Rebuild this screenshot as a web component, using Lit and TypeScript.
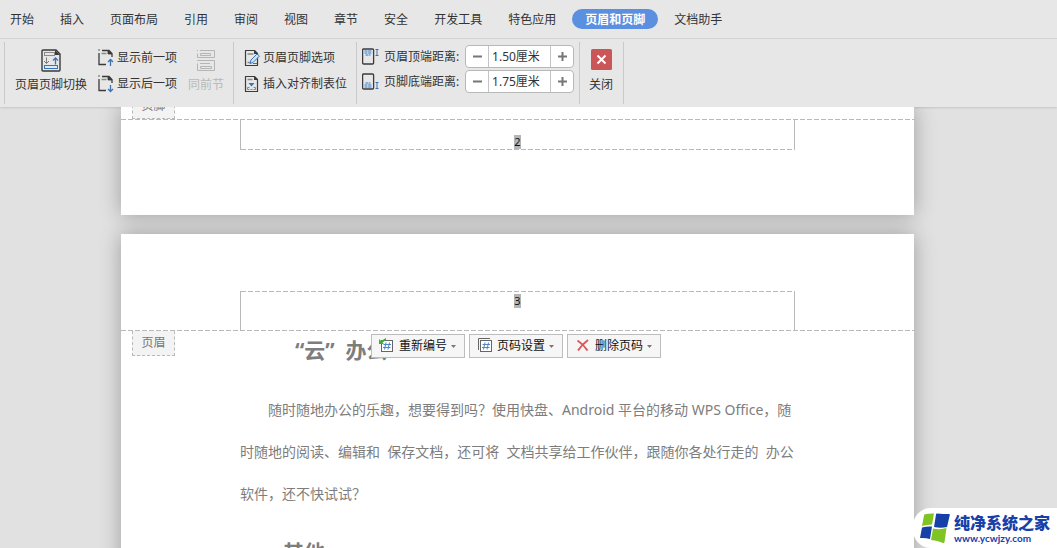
import { LitElement, html, css, svg } from "lit";
import { customElement, property, state } from "lit/decorators.js";

const DARK = "#3b3b3b";
const BLUE = "#3a74b8";

/* Sheet outline with a folded top-right corner, shared by the ribbon icons. */
const sheet = svg`
  <path d="M1.5 1.5h9l3 3v12h-12z" fill="none" stroke=${DARK} stroke-width="1.2" stroke-linejoin="round"/>
  <path d="M10 1l4 4h-4z" fill=${DARK}/>`;

const icons = {
  swap: html`<svg width="20" height="23" viewBox="0 0 20 23" aria-hidden="true">
    <path d="M1 2q0-1 1-1h13l4 4v16q0 1-1 1h-16q-1 0-1-1z" fill="none" stroke=${DARK} stroke-width="1.4"/>
    <path d="M14 1l5 5h-5z" fill=${DARK}/>
    <rect x="3.500" y="3.500" width="10" height="3" fill="none" stroke="#8a8a8a"/>
    <path d="M5.500 8.500v6M3 12l2.500 2.500L8 12" fill="none" stroke="#7d7d7d"/>
    <path d="M14.500 15.500V9M12 11.500L14.500 9l2.500 2.500" fill="none" stroke=${BLUE} stroke-width="1.3"/>
    <rect x="3.500" y="16.500" width="13" height="3" fill="#dcebfa" stroke=${BLUE}/>
  </svg>`,
  prev: html`<svg width="16" height="18" viewBox="0 0 16 18" aria-hidden="true">
    <path d="M1 4v11.500h7M4 1.500h7l3 3V8" fill="none" stroke=${DARK} stroke-width="1.3"/>
    <path d="M0 1h2M10 1l4 4H10z" fill=${DARK} stroke=${DARK} stroke-width=".8"/>
    <path d="M3.500 4.500h5" stroke="#8a8a8a" stroke-width="1.500"/>
    <path d="M12.500 17v-6.500M10 13l2.500-2.500L15 13" fill="none" stroke=${BLUE} stroke-width="1.3"/>
  </svg>`,
  next: html`<svg width="16" height="18" viewBox="0 0 16 18" aria-hidden="true">
    <path d="M1 4v11.500h7M4 1.500h7l3 3V8" fill="none" stroke=${DARK} stroke-width="1.3"/>
    <path d="M0 1h2M10 1l4 4H10z" fill=${DARK} stroke=${DARK} stroke-width=".8"/>
    <path d="M3.500 4.500h5" stroke="#8a8a8a" stroke-width="1.500"/>
    <path d="M12.500 10v6.500M10 14l2.500 2.500L15 14" fill="none" stroke=${BLUE} stroke-width="1.3"/>
  </svg>`,
  same: html`<svg width="20" height="23" viewBox="0 0 20 23" aria-hidden="true" fill="none" stroke="#b5b5b5">
    <path d="M1.500 1v1M1.500 4.500v4h17V1.500H4M4.500 4.500h10v2h-10z"/>
    <path d="M1.500 12v-.5h17v10h-17v-7M4.500 17.500h11v2h-11zM4 14.500h10"/>
  </svg>`,
  options: html`<svg width="16" height="18" viewBox="0 0 16 18" aria-hidden="true">
    ${sheet}
    <path d="M3.500 5h6M3.500 13.500h3" stroke="#8a8a8a" stroke-width="1.500"/>
    <path d="M6 14.500l1-3.500 6-6 2.500 2-6.500 6.500z" fill="#cfe3f8" stroke=${BLUE}/>
    <path d="M9 14.500h4" stroke=${BLUE}/>
  </svg>`,
  align: html`<svg width="16" height="18" viewBox="0 0 16 18" aria-hidden="true">
    ${sheet}
    <path d="M3.500 4.500h5" stroke="#8a8a8a" stroke-width="1.500"/>
    <path d="M4.500 8h6l-3 3.500z" fill=${BLUE}/>
    <path d="M3.500 14.500v-2h2M11.500 14.500v-2h-2M3.500 14.500h2m1 0h2m1 0h2" fill="none" stroke="#6b8db5"/>
  </svg>`,
  top: html`<svg width="18" height="17" viewBox="0 0 18 17" aria-hidden="true">
    <rect x=".6" y="1" width="11" height="15" rx="1" fill="none" stroke=${DARK} stroke-width="1.3"/>
    <rect x="2.500" y="2.500" width="7" height="4" fill="#dcebfa"/>
    <path d="M2.500 3h7.500M2.500 5h7.500M3.500 7h5" stroke=${BLUE} stroke-dasharray="3 .6"/>
    <path d="M13.500 1.500h3M15 1.500v6M13.500 7.500h3" stroke=${BLUE}/>
  </svg>`,
  bottom: html`<svg width="18" height="17" viewBox="0 0 18 17" aria-hidden="true">
    <rect x=".6" y="1" width="11" height="15" rx="1" fill="none" stroke=${DARK} stroke-width="1.3"/>
    <rect x="2.500" y="10" width="7" height="4" fill="#dcebfa"/>
    <path d="M3.500 10h5M2.500 12h7.500M2.500 14h7.500" stroke=${BLUE} stroke-dasharray="3 .6"/>
    <path d="M13.500 9.500h3M15 9.500v6M13.500 15.500h3" stroke=${BLUE}/>
  </svg>`,
  close: html`<svg width="21" height="21" viewBox="0 0 21 21" aria-hidden="true">
    <rect width="21" height="21" rx="1.500" fill="#cb5658"/>
    <path d="M6.500 6.500l8 8m0-8l-8 8" stroke="#fff" stroke-width="2"/>
  </svg>`,
  renumber: html`<svg width="16" height="16" viewBox="0 0 16 16" aria-hidden="true">
    <rect x="2.500" y="2.500" width="11" height="11" fill="#fff" stroke="#666"/>
    <path d="M7 4.500l-1.500 7M10.500 4.500l-1.500 7M4.500 6.500h7.500M4 9.500h7.500" stroke="#4a87c9"/>
    <path d="M0 1v5h5L3.500 4.500 7 2V0L2 3z" fill="#3fae2a"/>
  </svg>`,
  setup: html`<svg width="16" height="16" viewBox="0 0 16 16" aria-hidden="true">
    <path d="M1.500 12V.5H13" fill="none" stroke="#666"/>
    <rect x="3.500" y="2.500" width="11" height="11" fill="#fff" stroke="#666"/>
    <path d="M8 4.500l-1.500 7M11.500 4.500l-1.500 7M5.500 6.500h7.500M5 9.500h7.500" stroke="#4a87c9"/>
  </svg>`,
  remove: html`<svg width="16" height="16" viewBox="0 0 16 16" aria-hidden="true">
    <path d="M2.500 2.500q6 4 10 10M13 2Q7 6.500 3 12.500" fill="none" stroke="#d9595b" stroke-width="2"/>
  </svg>`,
  logo: html`<svg width="30" height="31" viewBox="0 0 30 31" aria-hidden="true">
    <path d="M4 2.500q0-1 1-1.300 5-1 9-.7L12 11.500q-5 0-10 1.500z" fill="#7fc424"/>
    <path d="M16 1.500q0-1 1-1 6 .5 12 .5 1 0 .8 1L27 14q-6 1.500-13 0z" fill="#1440a8"/>
    <path d="M2 14.500q5-1.500 10-1L10 26Q5 24.500 0 25z" fill="#1440a8"/>
    <path d="M13 15.500q7 1.500 13.500-.5L24.500 29q-.3 1.500-1.500 1-5-2.500-12-3z" fill="#7fc424"/>
  </svg>`,
};

const FONT = css`"Noto Sans", "Noto Sans CJK SC", sans-serif`;

@customElement("distance-stepper")
class DistanceStepper extends LitElement {
  @property() label = "";
  @property({ type: Number }) value = 0;
  @property({ attribute: false }) icon: unknown = null;

  static styles = css`
    :host { display: flex; align-items: center; height: 25px; font: 12px/18px ${FONT}; color: #333; }
    svg { display: block; flex: none; }
    .caption { display: flex; align-items: center; gap: 4px; width: 103px; white-space: nowrap; }
    .box { display: flex; height: 23px; box-sizing: border-box; border: 1px solid #b8b8b8; border-radius: 4px; background: #fff; overflow: hidden; }
    .step { width: 22px; padding: 0; border: 0; background: none; display: grid; place-items: center; }
    .field { width: 63px; box-sizing: border-box; padding: 0 3px; border: solid #c4c4c4; border-width: 0 1px; background: none; font: inherit; color: #333; outline: none; }
  `;

  private bump(by: number) {
    this.value = Math.max(0, this.value + by);
  }

  render() {
    return html`
      <label class="caption" for="field">${this.icon}${this.label}:</label>
      <div class="box">
        <button class="step" aria-label="减少" @click=${() => this.bump(-0.05)}>
          <svg width="9" height="9" viewBox="0 0 9 9"><path d="M0 4.500h9" stroke="#777" stroke-width="2"/></svg>
        </button>
        <input class="field" id="field" .value=${this.value.toFixed(2) + "厘米"} />
        <button class="step" aria-label="增加" @click=${() => this.bump(0.05)}>
          <svg width="9" height="9" viewBox="0 0 9 9"><path d="M0 4.500h9M4.500 0v9" stroke="#777" stroke-width="2"/></svg>
        </button>
      </div>`;
  }
}

@customElement("app-root")
class AppRoot extends LitElement {
  @state() private active = "页眉和页脚";

  private tabs = ["开始", "插入", "页面布局", "引用", "审阅", "视图", "章节", "安全", "开发工具", "特色应用", "页眉和页脚", "文档助手"];

  static styles = css`
    :host { display: flex; flex-direction: column; height: 100vh; overflow: hidden; position: relative; background: #e1e1e1; font: 12px/18px ${FONT}; color: #333; }
    button { font: inherit; color: inherit; border: 0; background: none; padding: 0; margin: 0; white-space: nowrap; }
    svg { display: block; flex: none; }

    .tabs { display: flex; align-items: center; height: 38px; flex: none; padding: 0 10px; gap: 26px; background: #e7e7e7; border-bottom: 1px solid #d5d5d5; }
    .tab { padding-top: 2px; }
    .tab.active { margin: 0 -10px; padding: 2px 13px 0; border-radius: 10px; background: #5b8fe0; color: #fff; font-weight: 700; }

    .ribbon { display: flex; flex: none; height: 68px; box-sizing: border-box; padding: 3px 4px; background: #e7e7e7; box-shadow: 0 1px 2px #0000001f; position: relative; }
    .group { display: flex; gap: 11px; padding: 0 9px 0 10px; border-left: 1px solid #cacaca; }
    .group.last { padding: 0 10px 0 9px; border-right: 1px solid #cacaca; }
    .big { display: flex; flex-direction: column; align-items: center; justify-content: start; gap: 4px; padding-top: 7px; }
    .last .big { gap: 6px; }
    .big:disabled { color: #b9b9b9; }
    .rows { display: flex; flex-direction: column; gap: 8px; padding-top: 7px; }
    .small { display: flex; align-items: center; gap: 3px; height: 18px; }
    .steppers { display: flex; flex-direction: column; padding-top: 2px; }
    .group.distances { padding: 0 5px; }

    .desk { flex: 1; min-height: 0; overflow: hidden; padding-right: 22px; display: flex; flex-direction: column; align-items: center; gap: 19px; }
    .page { width: 793px; max-width: 100%; box-sizing: border-box; flex: none; position: relative; box-shadow: 0 0 20px #0000004d; background: #fff; }
    .page.first { padding-bottom: 65px; padding-top: 12px; }
    .page.second { padding-top: 57px; flex: 1 0 auto; }
    .zone { display: flex; flex-direction: column; position: relative; }
    .rule { height: 1px; flex: none; background: repeating-linear-gradient(90deg, #b9b9b9 0 5px, transparent 5px 7px); }
    .frame { margin: 0 119px; height: 30px; box-sizing: border-box; border: solid #b9b9b9; border-width: 0 1px; display: flex; flex-direction: column; align-items: center; }
    .frame.head { height: 39px; }
    .frame .rule { width: 100%; }
    .number { font-size: 11px; line-height: 14px; background: #b5b5b5; color: #111; }
    .foot .number { margin-top: 15px; }
    .head .number { margin-top: 2px; }
    .tag { position: absolute; left: 11px; box-sizing: border-box; width: 43px; height: 25px; border: 1px dashed #b9b9b9; background: #f3f3f3; color: #777; display: grid; place-items: center; }
    .tag.below { top: 100%; border-top: 0; }
    .tag.above { bottom: 31px; border-top: 0; }

    .text { margin: 0 119px; color: #7d7d7d; }
    h2 { margin: 0; font-size: 21px; line-height: 38px; font-weight: 700; padding-left: 43px; white-space: pre; }
    .text h2:first-child { padding-left: 55px; }
    p { margin: 20px 0 18px; font-size: 14px; line-height: 42px; }
    .line { display: block; white-space: pre; }
    .line.indent { padding-left: 28px; }

    .actions { position: absolute; left: 250px; top: 100%; margin-top: 3px; display: flex; gap: 4px; z-index: 1; }
    .action { display: flex; align-items: center; width: 94px; height: 24px; padding: 0 7px; gap: 4px; box-sizing: border-box; border: 1px solid #bdbdbd; background: #f6f6f6; color: #111; }

    .mark { position: absolute; right: 0; bottom: 0; display: flex; align-items: center; gap: 4px; height: 40px; box-sizing: border-box; padding: 0 7px; background: #fff; border-radius: 18px 0 0 18px; color: #1740a8; text-decoration: none; z-index: 2; }
    .words { display: flex; flex-direction: column; padding-top: 2px; }
    .name { font-size: 16px; line-height: 18px; font-weight: 900; }
    .url { font: 700 10px/12px Lato, sans-serif; }
  `;

  private action(icon: unknown, label: string) {
    return html`<button class="action">${icon}<span>${label}</span>
      <svg width="5" height="3" viewBox="0 0 5 3" aria-hidden="true"><path d="M0 0h5L2.500 3z" fill="#777"/></svg>
    </button>`;
  }

  render() {
    return html`
      <nav class="tabs">
        ${this.tabs.map((t) => html`<button class="tab ${t === this.active ? "active" : ""}" @click=${() => (this.active = t)}>${t}</button>`)}
      </nav>
      <div class="ribbon">
        <div class="group">
          <button class="big">${icons.swap}页眉页脚切换</button>
          <div class="rows">
            <button class="small">${icons.prev}显示前一项</button>
            <button class="small">${icons.next}显示后一项</button>
          </div>
          <button class="big" disabled>${icons.same}同前节</button>
        </div>
        <div class="group">
          <div class="rows">
            <button class="small">${icons.options}页眉页脚选项</button>
            <button class="small">${icons.align}插入对齐制表位</button>
          </div>
        </div>
        <div class="group distances">
          <div class="steppers">
            <distance-stepper label="页眉顶端距离" .value=${1.5} .icon=${icons.top}></distance-stepper>
            <distance-stepper label="页脚底端距离" .value=${1.75} .icon=${icons.bottom}></distance-stepper>
          </div>
        </div>
        <div class="group last">
          <button class="big">${icons.close}关闭</button>
        </div>
      </div>

      <main class="desk">
        <section class="page first">
          <div class="zone">
            <div class="tag above">页脚</div>
            <div class="rule"></div>
            <div class="frame foot"><span class="number">2</span><div class="rule"></div></div>
          </div>
        </section>
        <section class="page second">
          <div class="zone">
            <div class="frame head"><div class="rule"></div><span class="number">3</span></div>
            <div class="rule"></div>
            <div class="tag below">页眉</div>
            <div class="actions">
              ${this.action(icons.renumber, "重新编号")}
              ${this.action(icons.setup, "页码设置")}
              ${this.action(icons.remove, "删除页码")}
            </div>
          </div>
          <article class="text">
            <h2>“云”  办公</h2>
            <p>
              <span class="line indent">随时随地办公的乐趣，想要得到吗？使用快盘、Android 平台的移动 WPS Office，随</span>
              <span class="line">时随地的阅读、编辑和  保存文档，还可将  文档共享给工作伙伴，跟随你各处行走的  办公</span>
              <span class="line">软件，还不快试试？</span>
            </p>
            <h2>其他</h2>
          </article>
        </section>
      </main>

      <a class="mark" href="#">
        ${icons.logo}
        <span class="words"><span class="name">纯净系统之家</span><span class="url">www.ycwjzy.com</span></span>
      </a>`;
  }
}
